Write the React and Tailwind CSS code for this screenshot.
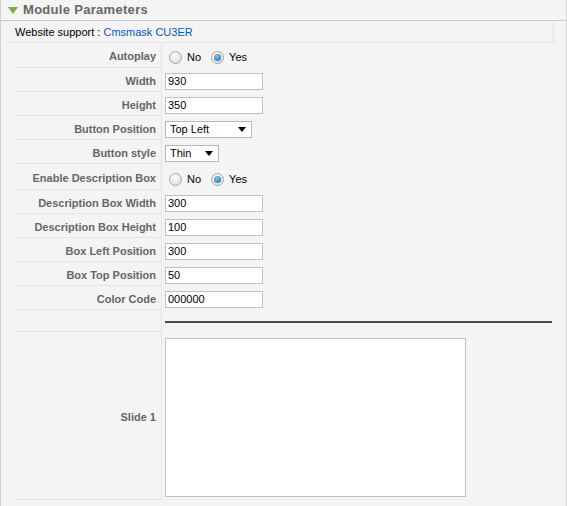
import React from "react";

const rows = [
  { label: "Autoplay", type: "radio", h: "h-[25px]" },
  { label: "Width", type: "text", value: "930" },
  { label: "Height", type: "text", value: "350" },
  { label: "Button Position", type: "select", value: "Top Left", w: "w-[87px]" },
  { label: "Button style", type: "select", value: "Thin", w: "w-[54px]" },
  { label: "Enable Description Box", type: "radio", h: "h-[26px]" },
  { label: "Description Box Width", type: "text", value: "300" },
  { label: "Description Box Height", type: "text", value: "100" },
  { label: "Box Left Position", type: "text", value: "300" },
  { label: "Box Top Position", type: "text", value: "50" },
  { label: "Color Code", type: "text", value: "000000" },
];

function Radio({ checked }) {
  return (
    <span className="relative inline-flex h-[13px] w-[13px] items-center justify-center rounded-full border border-[#a8a8a8] bg-[radial-gradient(circle_at_40%_35%,#ffffff,#d4d4d4)]">
      {checked && (
        <span className="h-[7px] w-[7px] rounded-full bg-[radial-gradient(circle_at_40%_35%,#7fc4ee,#1466a6)]" />
      )}
    </span>
  );
}

function Field({ row }) {
  if (row.type === "radio") {
    return (
      <div className="flex items-center gap-[5px] pl-[4px] pt-[2px]">
        <Radio />
        <span className="mr-[5px]">No</span>
        <Radio checked />
        <span>Yes</span>
      </div>
    );
  }
  if (row.type === "select") {
    return (
      <div
        className={`${row.w} flex h-[17px] items-center justify-between border border-[#b8b8b8] bg-white pl-[4px] pr-[5px]`}
      >
        <span>{row.value}</span>
        <svg width="8" height="5" viewBox="0 0 8 5">
          <path d="M0 0h8L4 5z" fill="#000" />
        </svg>
      </div>
    );
  }
  return (
    <div className="flex h-[17px] w-[98px] items-center border border-[#c0c0c0] bg-white pl-[2px]">
      {row.value}
    </div>
  );
}

function Row({ label, h = "h-[24px]", children }) {
  return (
    <div className={`flex ${h}`}>
      <div className="ml-[13px] flex w-[147px] items-center justify-end border-b border-[#e4e4e4] pr-[5px] pt-[3px] font-bold text-[#666]">
        {label}
      </div>
      <div className="flex flex-1 items-center border-l border-[#e4e4e4] pl-[3px] pt-[2px]">
        {children}
      </div>
    </div>
  );
}

export default function App() {
  return (
    <div
      className="h-[506px] w-[567px] overflow-hidden border-x border-[#cfcfcf] bg-[#f4f4f4] text-[11px] text-black"
      style={{ fontFamily: '"Liberation Sans", Arial, sans-serif' }}
    >
      <div className="flex h-[21px] items-center gap-[5px] border-b border-[#cccccc] pl-[7px]">
        <svg width="10" height="7" viewBox="0 0 10 7">
          <path d="M0 0h10L5 7z" fill="#7cae4a" />
        </svg>
        <span className="text-[13px] font-bold tracking-[0.3px] text-[#666]">Module Parameters</span>
      </div>

      <div className="ml-[4px] mr-[12px] flex h-[22px] items-center border-r border-b border-[#e4e4e4] pl-[10px] pt-[1px]">
        Website support :&nbsp;<span className="text-[#0b55c4]">Cmsmask CU3ER</span>
      </div>

      {rows.map((row) => (
        <Row key={row.label} label={row.label} h={row.h}>
          <Field row={row} />
        </Row>
      ))}

      <Row label="" h="h-[22px]">
        <div className="mr-[14px] h-[2px] flex-1 bg-[#4a4a4a]" />
      </Row>

      <Row label="Slide 1" h="h-[168px]">
        <div className="h-[159px] w-[301px] border border-[#c0c0c0] bg-white" />
      </Row>
    </div>
  );
}
